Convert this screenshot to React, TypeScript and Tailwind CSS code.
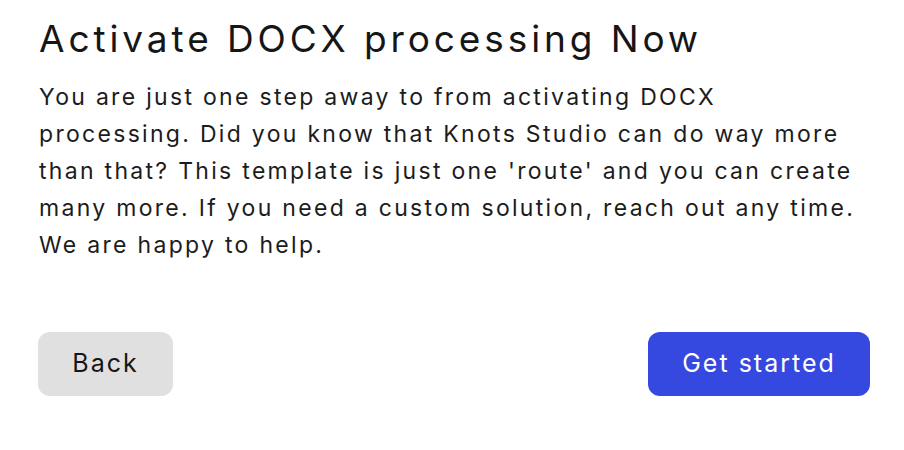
export default function App() {
  return (
    <div
      className="w-[904px] h-[450px] bg-white px-[39px] pt-[13px] text-[#161616]"
      style={{ fontFamily: 'Inter, "Noto Sans", sans-serif' }}
    >
      <h1 className="text-[37px] leading-[52px] font-normal tracking-[3.9px] whitespace-nowrap">
        Activate DOCX processing Now
      </h1>
      <p className="mt-[14px] text-[23px] leading-[37px] tracking-[2.3px] text-[#1c1c1c] whitespace-nowrap">
        You are just one step away to from activating DOCX
        <br />
        processing. Did you know that Knots Studio can do way more
        <br />
        than that? This template is just one 'route' and you can create
        <br />
        many more. If you need a custom solution, reach out any time.
        <br />
        We are happy to help.
      </p>
      <div className="mt-[68px] flex items-center justify-between w-[832px] -ml-[1px]">
        <button className="h-[64px] w-[135px] rounded-[12px] bg-[#e0e0e0] text-[25px] tracking-[2px] text-[#161616]">
          Back
        </button>
        <button className="h-[64px] w-[222px] rounded-[12px] bg-[#3548e0] text-[25px] tracking-[2px] text-white">
          Get started
        </button>
      </div>
    </div>
  );
}
